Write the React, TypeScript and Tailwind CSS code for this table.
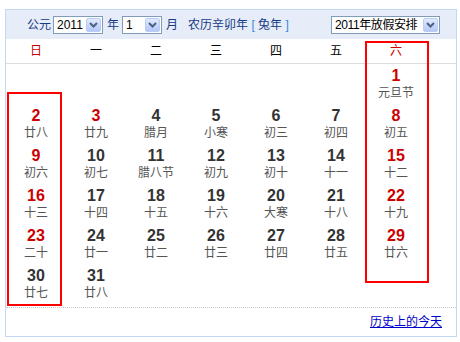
import React from 'react';

type Day = { d: number; lunar: string; red?: boolean } | null;

// January 2011, week starts on Sunday
const weeks: Day[][] = [
  [null, null, null, null, null, null, { d: 1, lunar: '元旦节', red: true }],
  [
    { d: 2, lunar: '廿八', red: true },
    { d: 3, lunar: '廿九', red: true },
    { d: 4, lunar: '腊月' },
    { d: 5, lunar: '小寒' },
    { d: 6, lunar: '初三' },
    { d: 7, lunar: '初四' },
    { d: 8, lunar: '初五', red: true },
  ],
  [
    { d: 9, lunar: '初六', red: true },
    { d: 10, lunar: '初七' },
    { d: 11, lunar: '腊八节' },
    { d: 12, lunar: '初九' },
    { d: 13, lunar: '初十' },
    { d: 14, lunar: '十一' },
    { d: 15, lunar: '十二', red: true },
  ],
  [
    { d: 16, lunar: '十三', red: true },
    { d: 17, lunar: '十四' },
    { d: 18, lunar: '十五' },
    { d: 19, lunar: '十六' },
    { d: 20, lunar: '大寒' },
    { d: 21, lunar: '十八' },
    { d: 22, lunar: '十九', red: true },
  ],
  [
    { d: 23, lunar: '二十', red: true },
    { d: 24, lunar: '廿一' },
    { d: 25, lunar: '廿二' },
    { d: 26, lunar: '廿三' },
    { d: 27, lunar: '廿四' },
    { d: 28, lunar: '廿五' },
    { d: 29, lunar: '廿六', red: true },
  ],
  [{ d: 30, lunar: '廿七' }, { d: 31, lunar: '廿八' }, null, null, null, null, null],
];

const weekdays = ['日', '一', '二', '三', '四', '五', '六'];

function Chevron() {
  return (
    <svg width="9" height="6" viewBox="0 0 9 6">
      <polyline points="1,1 4.5,4.5 8,1" fill="none" stroke="#4d6185" strokeWidth="2" />
    </svg>
  );
}

function DropBox({ value, className, textClass = '' }: { value: string; className: string; textClass?: string }) {
  return (
    <div className={`h-[18px] flex items-center bg-white border border-[#7f9db9] ${className}`}>
      <span className={`flex-1 pl-[3px] text-[12px] leading-[16px] text-black whitespace-nowrap ${textClass}`}>{value}</span>
      <div className="w-[15px] h-[14px] mr-px flex items-center justify-center rounded-[2px] border border-[#b9cdf5] bg-gradient-to-b from-[#e1eafe] to-[#b4c8f6]">
        <Chevron />
      </div>
    </div>
  );
}

export default function App() {
  return (
    <div className="w-[460px] h-[342px] bg-white pt-[9px] pl-[5px] font-['Liberation_Sans','Noto_Sans_CJK_SC',sans-serif]">
      <div className="relative w-[452px] h-[328px] border border-[#c3d8f3] flex flex-col">
        {/* toolbar */}
        <div className="h-[29px] bg-[#e6edf8] flex items-center pl-[21px] pr-[16px] text-[12px] text-[#173a86]">
          <span>公元</span>
          <DropBox value="2011" className="w-[50px] ml-[2px]" />
          <span className="ml-[4px]">年</span>
          <DropBox value="1" className="w-[40px] ml-[3px]" />
          <span className="ml-[4px]">月</span>
          <span className="ml-[10px]">
            农历辛卯年 <span className="text-[#3b87dc]">[</span> 兔年 <span className="text-[#3b87dc]">]</span>
          </span>
          <DropBox value="2011年放假安排" className="w-[109px] ml-auto" textClass="pl-[2px] tracking-[-0.4px]" />
        </div>

        {/* weekday header */}
        <div className="h-[25px] border-b border-[#dddddd] grid grid-cols-[repeat(7,60px)] items-center text-[12px]">
          {weekdays.map((w, i) => (
            <div key={w} className={`text-center ${i === 0 || i === 6 ? 'text-[#cc0000]' : 'text-black'}`}>
              {w}
            </div>
          ))}
        </div>

        {/* days */}
        <div className="h-[243px] pt-[2px] grid grid-cols-[repeat(7,60px)] auto-rows-[40px] content-start">
          {weeks.flat().map((day, i) => (
            <div key={i} className="flex flex-col items-center">
              {day && (
                <>
                  <span
                    className={`h-[19px] leading-[19px] text-[16px] font-bold font-['Liberation_Sans',sans-serif] ${
                      day.red ? 'text-[#cc0000]' : 'text-[#333333]'
                    }`}
                  >
                    {day.d}
                  </span>
                  <span className="h-4 leading-4 text-[12px] text-[#555555]">{day.lunar}</span>
                </>
              )}
            </div>
          ))}
        </div>

        <div className="border-t border-dotted border-[#cccccc] h-[28px] flex items-center justify-end pr-[14px]">
          <a href="#" className="text-[12px] text-[#0000cc] underline">
            历史上的今天
          </a>
        </div>

        {/* red highlight frames */}
        <div className="absolute left-[1px] top-[82px] w-[55px] h-[214px] border-2 border-[#ff0000]" />
        <div className="absolute left-[359px] top-[31px] w-[64px] h-[242px] border-2 border-[#ff0000]" />
      </div>
    </div>
  );
}
